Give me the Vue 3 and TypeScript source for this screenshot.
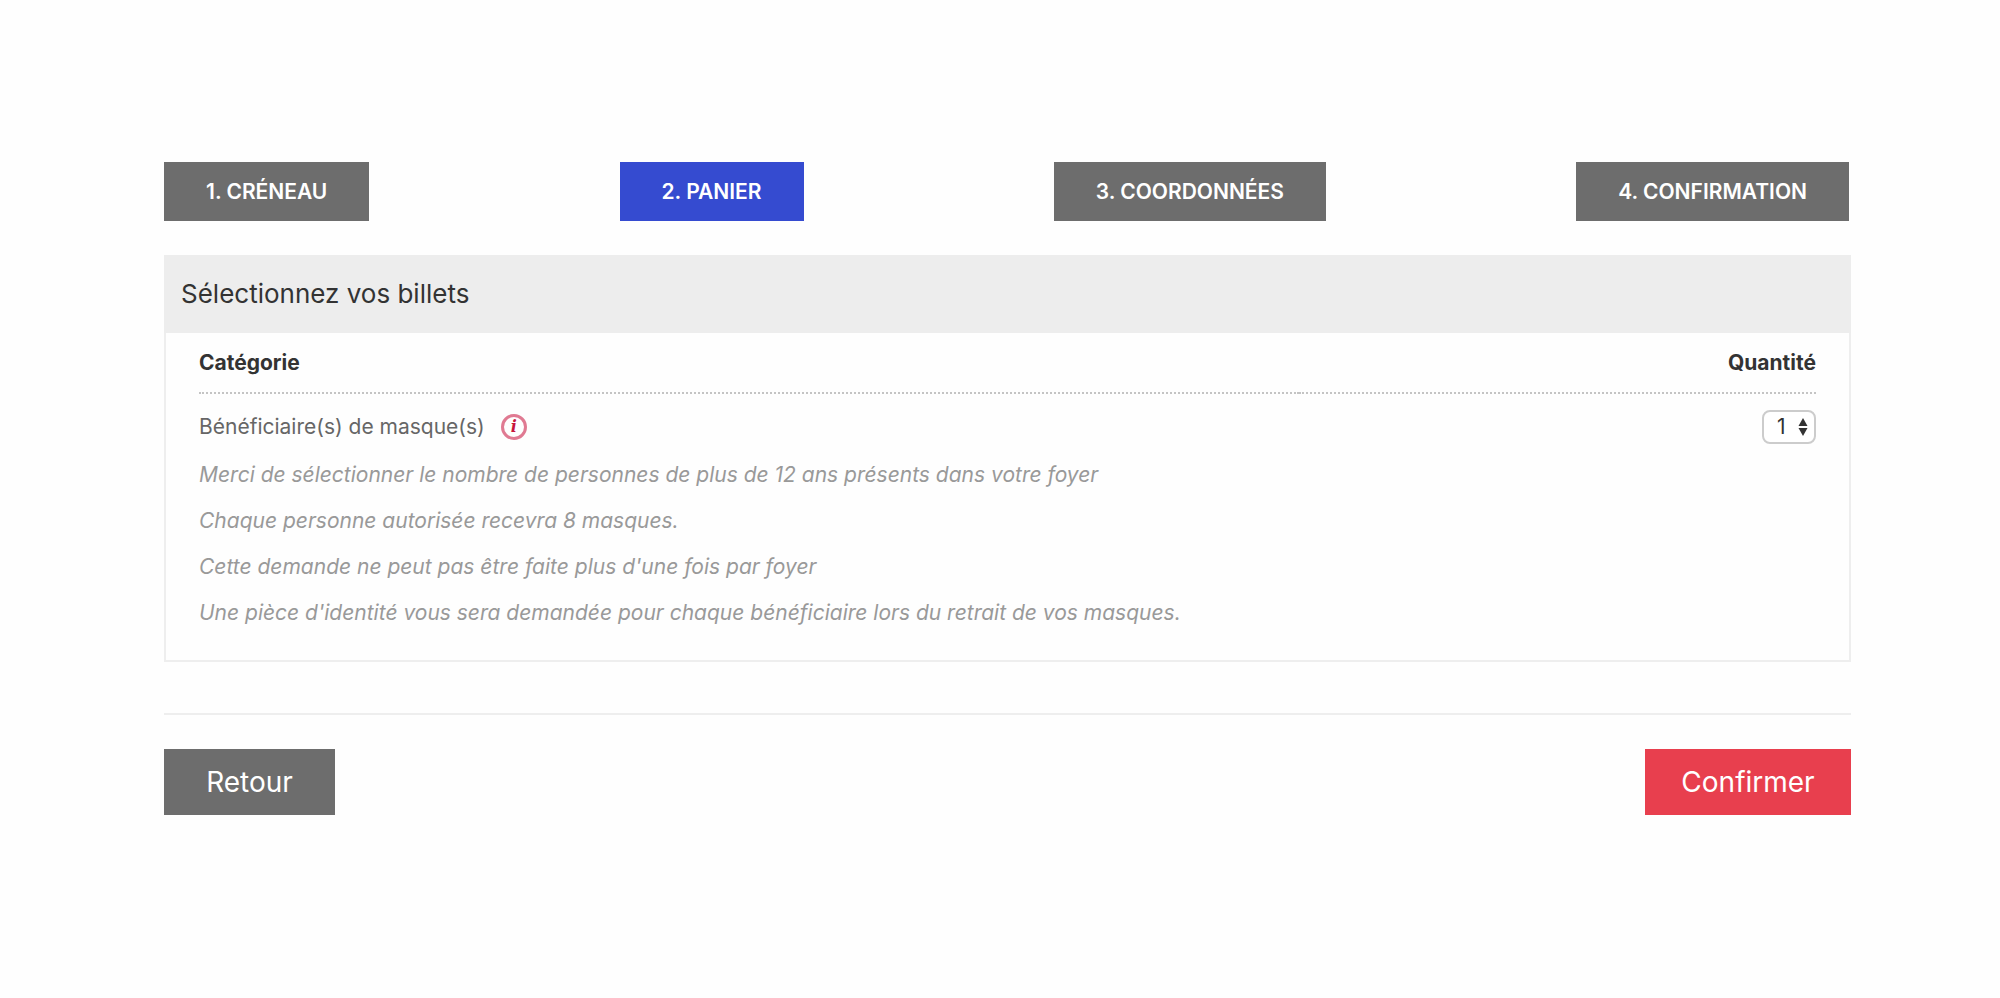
<script setup lang="ts">
import { ref } from 'vue'

interface Step {
  label: string
  active: boolean
}

const steps: Step[] = [
  { label: '1. CRÉNEAU', active: false },
  { label: '2. PANIER', active: true },
  { label: '3. COORDONNÉES', active: false },
  { label: '4. CONFIRMATION', active: false },
]

const notes: string[] = [
  'Merci de sélectionner le nombre de personnes de plus de 12 ans présents dans votre foyer',
  'Chaque personne autorisée recevra 8 masques.',
  "Cette demande ne peut pas être faite plus d'une fois par foyer",
  "Une pièce d'identité vous sera demandée pour chaque bénéficiaire lors du retrait de vos masques.",
]

const quantity = ref<number>(1)
const choices: number[] = [1, 2, 3, 4, 5, 6]
</script>

<template>
  <main class="page">
    <ol class="steps">
      <li
        v-for="step in steps"
        :key="step.label"
        class="step"
        :class="{ active: step.active }"
        :aria-current="step.active ? 'step' : undefined"
      >
        {{ step.label }}
      </li>
    </ol>

    <form @submit.prevent>
      <section class="panel">
        <h1 class="panel-title">Sélectionnez vos billets</h1>
        <div class="panel-body">
          <table class="tickets">
            <thead>
              <tr>
                <th class="category" scope="col">Catégorie</th>
                <th class="amount" scope="col">Quantité</th>
              </tr>
            </thead>
            <tbody>
              <tr>
                <td>
                  <div class="ticket">
                    <label for="quantity">Bénéficiaire(s) de masque(s)</label>
                    <button class="info" type="button">i</button>
                  </div>
                </td>
                <td class="amount">
                  <span class="picker">
                    <select id="quantity" v-model="quantity">
                      <option v-for="n in choices" :key="n" :value="n">{{ n }}</option>
                    </select>
                    <svg class="arrows" viewBox="0 0 10 20" aria-hidden="true">
                      <path d="M5 1 9.500 9H.5zM.5 11h9L5 19z" />
                    </svg>
                  </span>
                </td>
              </tr>
            </tbody>
          </table>
          <p v-for="note in notes" :key="note" class="note">{{ note }}</p>
        </div>
      </section>

      <div class="actions">
        <button class="action back" type="button">Retour</button>
        <button class="action confirm" type="submit">Confirmer</button>
      </div>
    </form>
  </main>
</template>

<style>
body {
  background: #fefefe;
}
</style>

<style scoped>
.page {
  padding: 162px 149px 48px 164px;
  color: #333;
  font-family: Inter, "Open Sans", sans-serif;
  font-size: 21px;
  line-height: 26px;
}

.steps {
  display: flex;
  justify-content: space-between;
  margin: 0 2px 34px 0;
  padding: 0;
  list-style: none;
}

.step {
  padding: 17px 42px 16px;
  background: #6d6d6d;
  color: #fff;
  font-weight: 600;
}

.step.active {
  background: #354bd0;
}

.panel {
  border: 2px solid #eee;
  border-top: 0;
}

.panel-title {
  margin: 0 -2px;
  padding: 22px 17px;
  background: #ededed;
  font-size: 26px;
  font-weight: 400;
  line-height: 34px;
}

.panel-body {
  padding: 0 33px 24px;
}

.tickets {
  width: 100%;
  border-spacing: 0;
}

.tickets th {
  padding: 17px 0 16px;
  border-bottom: 2px dotted #c4c4c4;
  font-weight: 700;
  text-align: left;
}

.tickets td {
  padding: 16px 0 8px;
  color: #666;
}

.tickets .category {
  width: 68%;
}

.tickets .amount {
  text-align: right;
}

.ticket {
  display: flex;
  align-items: center;
  gap: 16px;
}

.info {
  width: 26px;
  height: 26px;
  padding: 0;
  border: 3px solid #e07a92;
  border-radius: 50%;
  background: none;
  color: #c8143c;
  font: italic 700 16px/20px "DejaVu Serif", serif;
}

.picker {
  display: inline-block;
  position: relative;
  vertical-align: top;
}

select {
  display: block;
  width: 54px;
  height: 34px;
  padding: 0 0 0 13px;
  border: 2px solid #ccc;
  border-radius: 8px;
  appearance: none;
  background: #fff;
  color: #333;
  font: inherit;
}

.arrows {
  position: absolute;
  top: 7px;
  right: 8px;
  width: 10px;
  height: 20px;
  fill: #333;
  pointer-events: none;
}

.note {
  margin: 0;
  color: #999;
  font-style: italic;
  line-height: 46px;
}

.actions {
  display: flex;
  justify-content: space-between;
  margin-top: 51px;
  padding-top: 34px;
  border-top: 2px solid #eee;
}

.action {
  min-width: 171px;
  padding: 16px 34px;
  border: 0;
  color: #fff;
  font: inherit;
  font-size: 28px;
  line-height: 34px;
}

.back {
  background: #6d6d6d;
}

.confirm {
  min-width: 206px;
  background: #e83f4e;
}
</style>
